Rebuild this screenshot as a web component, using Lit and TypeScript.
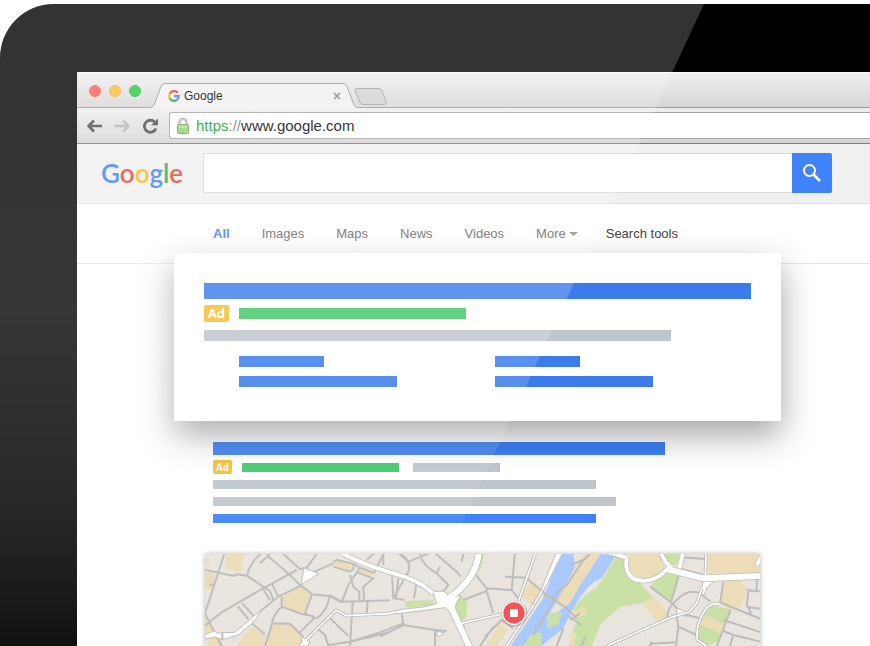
import { LitElement, html, svg, css } from "lit";
import { customElement, property } from "lit/decorators.js";

type Tone = "blue" | "green" | "grey";

/** A solid placeholder line standing in for result text. */
@customElement("text-bar")
class TextBar extends LitElement {
  @property({ reflect: true }) tone: Tone = "grey";
  @property({ type: Number }) span = 100;

  static styles = css`
    :host { display: block; flex: 1; }
    .bar { height: var(--bar-height, 11px); }
    .blue { background: var(--bar-blue, #3b7bec); }
    .green { background: #3fc766; }
    .grey { background: #bec6cc; }
  `;

  render() {
    return html`<div class="bar ${this.tone}" style="width:${this.span}px;max-width:100%"></div>`;
  }
}

@customElement("city-map")
class CityMap extends LitElement {
  static styles = css`
    :host { display: block; }
    svg { display: block; width: 100%; }
    .land { fill: #e9e5de; }
    .sand { fill: #ecdcb8; }
    .park { fill: #c9e1a7; }
    .water { fill: #a9c9ff; }
    .open { fill: #fff; stroke: #bdbdbd; stroke-width: 3; stroke-linejoin: round; }
    .street { fill: none; stroke: #bdbdbd; stroke-width: 6; stroke-linejoin: round; }
    .edge { fill: none; stroke: #b8b8b8; stroke-linejoin: round; }
    .road { fill: none; stroke: #fff; stroke-linejoin: round; }
    .e9 { stroke-width: 10; } .r9 { stroke-width: 5; }
    .e14 { stroke-width: 16; } .r14 { stroke-width: 12; }
    .e22 { stroke-width: 22; } .r22 { stroke-width: 18; }
  `;

  render() {
    const thin = [
      "M330 303L438 196L470 212L600 206",
      "M1250 303L1350 258L1440 218L1497 201L1520 175L1536 130",
      "M950 303L1025 190L1060 130",
      "M1550 303L1522 285Q1515 240 1545 195Q1560 172 1590 178",
      "M810 236L870 222L942 206",
      "M985 170L1038 20",
      "M1546 100L1548 20",
    ];
    const medium = [
      "M440 15Q500 52 600 82Q690 105 728 145",
      "M1310 40Q1300 105 1360 107Q1400 108 1432 72",
      "M1250 20L1310 38",
      "M1412 20Q1420 50 1446 68",
      "M1468 70L1480 20",
      "M1700 60L1720 25",
    ];
    const wide = [
      "M866 20Q862 100 776 160L790 200L840 310",
      "M1430 72L1540 100L1710 93",
    ];
    return html`<svg viewBox="45 27 1665 279" role="img" aria-label="City map">
      ${svg`
      <rect class="land" x="45" y="27" width="1668" height="279"/>
      <path class="sand" d="M45 38L60 42L58 62L45 66ZM45 80L75 84L70 135L45 130ZM110 27L165 27L160 40L150 50L160 60L150 82L105 68ZM45 210L70 252L45 270ZM50 275L75 268L92 306L60 306ZM275 158L333 120L365 150L342 206L312 198L282 182ZM185 246L222 268L225 306L135 306ZM245 236L300 238L340 280L340 306L228 306ZM430 48L480 52L486 70L470 77L432 66ZM512 64L550 80L542 98L505 84Z"/>
      <path class="sand" d="M1020 110L1056 138L1025 180L992 152ZM930 235L952 258L920 306L885 306ZM1150 70L1180 27L1238 27L1190 100L1140 205L1090 165ZM1318 27L1412 27L1424 70Q1395 108 1355 100Q1318 90 1314 50ZM1555 27L1713 27L1713 82L1555 92Z"/>
      <path class="water" d="M1110 27L1150 27L1155 65L1105 160L1020 306L960 306L1060 160Z"/>
      <path class="water" d="M1232 27L1276 34L1235 100Q1195 110 1150 190L1120 250L1050 306L1000 306L1060 230L1140 175L1165 130Z"/>
      <path class="park" d="M1278 35L1310 48Q1320 100 1362 105L1352 117L1390 158L1355 175L1290 185L1230 240L1205 303L1135 306L1160 220L1150 190Q1190 140 1220 130Z"/>
      <path class="park" d="M1430 75L1468 85L1444 168L1378 125L1405 100Q1420 90 1430 75ZM1424 27L1468 27Q1470 62 1446 62Q1428 55 1424 27ZM870 27L884 27L870 75L858 92ZM75 170M644 168L730 166L728 180L646 188ZM800 160L816 152L832 170L830 215L810 235Q782 190 800 160ZM1015 280Q1030 255 1055 265L1055 306L995 306ZM1078 205L1115 200L1105 240L1070 250ZM1565 180L1625 194L1582 290L1545 306L1525 280Q1520 230 1565 180Z"/>
      <path class="sand" d="M1145 205L1178 183L1188 190L1185 210L1160 218ZM1355 175L1392 158L1425 190L1430 232L1398 228L1380 200ZM1548 210L1605 240L1595 266L1530 240ZM1605 110L1650 106L1672 130L1655 180L1625 194L1590 175ZM1140 265L1160 265L1150 306L1140 306Z"/>
      <path class="street" d="M105 20L45 205M45 74L130 93L140 88L170 92L240 138L250 165M45 242L95 202L150 170L220 130L320 75M58 120L72 118M172 90Q180 50 220 20M210 55L240 27M230 30L300 90L332 122M280 27L330 72L350 68L380 27M215 125L240 165M245 115L265 155L333 122L355 88L430 55M143 184L175 222M157 175L190 212M265 155L215 195M185 235L225 268M275 155L275 185L335 207L372 214M275 185Q248 210 245 240L225 303M245 235L300 236L340 275M45 205L75 265L95 303M365 150L345 205L374 218L330 262M333 122L367 148L418 153L455 172L475 120L510 68M418 153Q415 195 378 222M430 50L440 45L485 55Q500 72 478 80L430 65M488 55L510 68L552 84L580 27M500 82L550 100L520 125L522 168M480 90L490 125L508 140L508 165M418 150L455 170L600 166M488 172L480 303M420 220L475 272M533 170L530 208M385 253L405 270L415 300L480 290L600 262M530 45L550 27"/>
      <path class="street" d="M580 27L580 60M630 27Q665 45 655 80L610 160M620 20L655 50L730 20M606 95L610 160L645 165M625 100L618 160M680 110L672 160M690 27Q695 60 740 85L775 120L755 145M730 20L800 80L812 95M740 85L750 65M820 27L815 50M858 90L890 130L890 138L820 165M890 130L965 135L985 160M975 20L965 135M945 95L1010 98M890 138L910 205M635 205L640 240L570 275M640 240L735 255L770 258M480 290L570 262L640 235M735 255L735 303M820 240L835 303M885 275L935 225L970 250M870 303L910 245M1010 100L1070 150L1130 190L1160 220M1090 150L1130 120L1180 45L1200 27M1095 160L1030 270M1060 150L1100 160M1140 60L1180 45M1140 225L1170 205M1100 303L1120 250M1175 303L1185 275M1130 210L1175 240M1380 125L1440 170L1490 215M1440 215L1432 220Q1430 190 1460 165Q1495 130 1530 145L1562 170M1468 85L1444 168M1475 37L1548 42M1472 72L1540 90M1490 210L1530 220M1590 175L1600 110M1590 172L1713 222M1622 195L1580 303M1600 225L1713 262M1460 215L1465 245L1520 270M1465 245L1458 303M1380 296L1460 292M1380 303L1385 290M1600 258L1630 270L1620 303M1630 270L1713 290M1675 185L1685 215M1670 185L1713 192M1670 135L1713 140M1670 185L1675 138M1700 95L1700 140"/>
      <path class="open" d="M342 68L387 86L333 120ZM45 268L72 258L82 264L134 262L195 210L216 194L190 232L145 270L97 284L75 276L45 282ZM738 260L764 262L745 277ZM1458 188L1495 203L1462 212ZM1540 100L1580 102L1550 130L1542 150L1532 148Z"/>
      ${thin.map((d) => svg`<path class="edge e9" d=${d}/>`)}
      ${medium.map((d) => svg`<path class="edge e14" d=${d}/>`)}
      ${wide.map((d) => svg`<path class="edge e22" d=${d}/>`)}
      <path class="open" d="M590 202L650 191L700 186L740 176L728 140L762 138L780 158L812 150L785 206L765 188L650 203L590 209Z"/>
      <path class="open" d="M1100 20L1120 20L1062 135L1055 130ZM335 275L360 292L350 306L335 300Z"/>
      ${thin.map((d) => svg`<path class="road r9" d=${d}/>`)}
      ${medium.map((d) => svg`<path class="road r14" d=${d}/>`)}
      ${wide.map((d) => svg`<path class="road r22" d=${d}/>`)}
      <path d="M97 262L97 286" class="street"/>
      <circle cx="973" cy="206" r="39" fill="#000" opacity=".18"/>
      <circle cx="972" cy="204" r="36" fill="#fff"/>
      <circle cx="972" cy="204" r="32" fill="#f65357"/>
      <rect x="960" y="192" width="24" height="24" fill="#fff"/>`}
    </svg>`;
  }
}

@customElement("app-root")
class AppRoot extends LitElement {
  static styles = css`
    :host {
      display: block;
      background: #fff;
      font-family: "Liberation Sans", Arial, sans-serif;
    }
    * { box-sizing: border-box; }
    button { border: 0; padding: 0; background: none; font: inherit; color: inherit; display: block; }
    svg { display: block; }
    .page { height: 100vh; overflow: hidden; padding-top: 4px; }
    .device {
      position: relative;
      min-height: 100%;
      padding: 68px 0 0 77px;
      border-radius: 54px 0 0 0;
      overflow: hidden;
      background: linear-gradient(#000 0, #020202 20%, #080808 50%, #151515 70%, #161616 84%, #111 100%);
    }
    .glare {
      position: absolute;
      inset: 0;
      pointer-events: none;
      z-index: 3;
      background: linear-gradient(rgba(255,255,255,.2) 0, rgba(255,255,255,.19) 48%, rgba(255,255,255,.1) 70%, rgba(255,255,255,0) 100%);
      clip-path: polygon(0 0, 704px 0, 405px 642px, 0 642px);
    }
    .screen { background: #fff; min-height: 574px; }

    .tabstrip {
      display: flex;
      align-items: flex-end;
      height: 36px;
      padding-left: 12px;
      background: linear-gradient(#efefef, #d6d6d6);
      box-shadow: inset 0 -1px #9a9a9a, inset 0 1px #f8f8f8;
    }
    .lights { display: flex; gap: 8px; padding-bottom: 11px; }
    .light { width: 12px; height: 12px; border-radius: 50%; }
    .close { background: #ff5f56; border: 1px solid #ec6259; }
    .min { background: #ffbd2e; border: 1px solid #e5ae3f; }
    .max { background: #2ac940; border: 1px solid #2eb543; }
    .tab {
      position: relative;
      display: flex;
      align-items: center;
      width: 208px;
      height: 25px;
      margin-left: 9px;
      padding: 0 17px 0 18px;
      gap: 4px;
      font-size: 12px;
      color: #000;
    }
    .tab-shape { position: absolute; inset: 0; }
    .tab-icon, .tab-title, .tab-close { position: relative; }
    .tab-title { flex: 1; }
    .new-tab { margin: 0 0 3px -4px; }

    .toolbar {
      display: flex;
      align-items: center;
      height: 36px;
      padding-left: 9px;
      background: linear-gradient(#eeeeee, #d4d4d4);
      border-bottom: 1px solid #7c7c7c;
    }
    .nav-icons { display: flex; gap: 10px; }
    .address {
      flex: 1;
      display: flex;
      align-items: center;
      gap: 7px;
      height: 27px;
      margin-left: 9px;
      padding-left: 7px;
      border: 1px solid #a6a6a6;
      border-right: 0;
      border-radius: 3px 0 0 3px;
      background: #fff;
      font-size: 15px;
      color: #000;
    }
    .secure { color: #0a9d1b; }
    .slashes { color: #777; }

    .search {
      display: flex;
      align-items: center;
      height: 60px;
      padding: 0 38px 2px 24px;
      background: #f0f0f0;
      border-bottom: 1px solid #e2e2e2;
    }
    .logo {
      width: 102px;
      font: 600 26px/32px Lato, sans-serif;
      text-decoration: none;
    }
    .lb { color: #3f82f5; } .lr { color: #ea4335; } .ly { color: #fbbc05; } .lg { color: #34a853; }
    .query {
      flex: 1;
      min-width: 0;
      height: 40px;
      border: 1px solid #d9d9d9;
      border-right: 0;
      padding: 0 12px;
      font: 16px "Liberation Sans", Arial, sans-serif;
      background: #fff;
    }
    .go {
      display: grid;
      place-items: center;
      width: 40px;
      height: 40px;
      border-radius: 0 2px 2px 0;
      background: #4083f9;
    }

    .filters {
      display: flex;
      gap: 28px;
      height: 60px;
      padding-left: 136px;
      border-bottom: 1px solid #e6e6e6;
      font-size: 13px;
      line-height: 59px;
      white-space: nowrap;
    }
    .kinds { display: flex; gap: 32px; }
    .filters a, .filters button { color: #666; text-decoration: none; }
    .filters .active { color: #3b7ff5; font-weight: 700; }
    .more { display: flex; align-items: center; gap: 3px; }
    .filters .tools { color: #444; }

    .card {
      position: relative;
      z-index: 2;
      margin: -11px 89px 0 97px;
      padding: 30px 30px 34px;
      background: #fff;
      box-shadow: 0 14px 32px rgba(0,0,0,.36);
    }
    .line { display: flex; align-items: center; }
    .badge {
      border-radius: 2px;
      background: #f6bd2d;
      color: #fff;
      font-family: "Open Sans", sans-serif;
      font-weight: 700;
      text-align: center;
    }
    .card .title { --bar-height: 16px; }
    .card .line { gap: 10px; margin: 6px 0 8px; }
    .card .badge { width: 25px; height: 17px; font-size: 13px; line-height: 17px; }
    .links {
      display: grid;
      grid-template-columns: 1fr 1fr;
      row-gap: 9px;
      margin-top: 15px;
      padding-left: 35px;
    }

    .result {
      --bar-height: 9px;
      --bar-blue: #3f82f9;
      display: grid;
      margin: 21px 105px 0 136px;
    }
    .result .title { --bar-height: 13px; --bar-blue: #3d80f6; }
    .result .line { gap: 10px; margin: 5px 0 6px; }
    .result .badge { width: 19px; height: 14px; font-size: 10px; line-height: 14px; }
    .result .site { flex: none; width: 161px; }
    .rows { display: grid; gap: 8px; }
    .map {
      margin: 31px 110px 0 128px;
      box-shadow: 0 0 5px rgba(0,0,0,.3);
    }
  `;

  private cardLinks = [85, 85, 158, 158];
  private resultRows: { tone: Tone; span: number }[] = [
    { tone: "grey", span: 383 },
    { tone: "grey", span: 403 },
    { tone: "blue", span: 383 },
  ];

  private tabStrip() {
    return html`<div class="tabstrip">
      <div class="lights">
        <button class="light close" aria-label="Close window"></button>
        <button class="light min" aria-label="Minimise"></button>
        <button class="light max" aria-label="Zoom"></button>
      </div>
      <div class="tab">
        <svg class="tab-shape" width="208" height="25" viewBox="0 0 208 25">
          <path d="M0 25L0 24.5Q3 24.5 4 22L11 4Q12.500 1 15 1L193 1Q196 1 197 4L204 22Q205 24.500 208 24.500L208 25Z" fill="#f0f0f0"/>
          <path d="M0 24.5Q3 24.500 4 22L11 3.500Q12.500 .5 15 .5L193 .5Q196 .5 197 3.500L204 22Q205 24.500 208 24.500" fill="none" stroke="#999"/>
        </svg>
        <svg class="tab-icon" width="12" height="12" viewBox="0 0 24 24" fill="none" stroke-width="4.800">
          <path d="M19.500 5.500A9.600 9.600 0 0 0 3.600 7.500" stroke="#ea4335"/>
          <path d="M3.600 7.500A9.600 9.600 0 0 0 3.600 16.500" stroke="#fbbc05"/>
          <path d="M3.600 16.500A9.600 9.600 0 0 0 18.300 19.500" stroke="#34a853"/>
          <path d="M18.300 19.500Q21.500 16.500 21.500 12.200L12 12.200" stroke="#4285f4"/>
        </svg>
        <span class="tab-title">Google</span>
        <button class="tab-close" aria-label="Close tab">
          <svg width="8" height="8" viewBox="0 0 8 8" stroke="#808080" stroke-width="1.500"><path d="M1 1L7 7M7 1L1 7"/></svg>
        </button>
      </div>
      <button class="new-tab" aria-label="New tab">
        <svg width="33" height="17" viewBox="0 0 33 17"><path d="M3 .5L25 .5Q27 .5 28 2.500L32 13.500Q33 16.500 30 16.500L9 16.500Q7 16.500 6 14.500L1 3Q.5 .5 3 .5Z" fill="#d2d2d2" stroke="#a2a2a2"/></svg>
      </button>
    </div>`;
  }

  private toolbar() {
    return html`<div class="toolbar">
      <div class="nav-icons">
        <button aria-label="Back">
          <svg width="18" height="16" viewBox="0 0 18 16" fill="none" stroke="#4c4c4c" stroke-width="2.600" stroke-linejoin="round"><path d="M8 2.500L2.500 8L8 13.500M2.500 8L16 8"/></svg>
        </button>
        <button aria-label="Forward">
          <svg width="18" height="16" viewBox="0 0 18 16" fill="none" stroke="#b4b4b4" stroke-width="2.400" stroke-linejoin="round"><path d="M9 2.500L14.500 8L9 13.500M0 8L14.500 8"/></svg>
        </button>
        <button aria-label="Reload">
          <svg width="18" height="16" viewBox="0 0 18 16"><path d="M12.700 4A6 6 0 1 0 14 10.500" fill="none" stroke="#4c4c4c" stroke-width="2.800"/><path d="M16 .5L16 7.200L9 7.200Z" fill="#4c4c4c"/></svg>
        </button>
      </div>
      <div class="address" role="textbox" aria-label="Address">
        <svg width="12" height="16" viewBox="0 0 12 16">
          <path d="M2.500 8L2.500 4.500Q2.500 1 6 1Q9.500 1 9.500 4.500L9.500 8" fill="none" stroke="#888" stroke-width="2"/>
          <path d="M2.500 8L2.500 4.500Q2.500 1 6 1Q9.500 1 9.500 4.500L9.500 8" fill="none" stroke="#e4e4e4" stroke-width=".8"/>
          <rect x=".5" y="6.500" width="11" height="9" rx="1" fill="#8fd36c" stroke="#6aa04c"/>
          <path d="M1.500 8L10.500 8M1.500 9.500L10.500 9.500" stroke="#b4e698"/>
        </svg>
        <span><span class="secure">https</span><span class="slashes">://</span>www.google.com</span>
      </div>
    </div>`;
  }

  render() {
    return html`<div class="page"><div class="device">
      <div class="screen">
        ${this.tabStrip()}
        ${this.toolbar()}
        <form class="search">
          <a class="logo" href="#" aria-label="Google"><span class="lb">G</span><span class="lr">o</span><span class="ly">o</span><span class="lb">g</span><span class="lg">l</span><span class="lr">e</span></a>
          <input class="query" type="text" aria-label="Search" />
          <button class="go" type="button" aria-label="Search">
            <svg width="20" height="20" viewBox="0 0 20 20" fill="none" stroke="#fff"><circle cx="7.500" cy="7.500" r="5.500" stroke-width="2"/><path d="M11.500 11.500L18 18" stroke-width="2.600"/></svg>
          </button>
        </form>
        <nav class="filters">
          <div class="kinds">
            <a class="active" href="#">All</a>
            <a href="#">Images</a>
            <a href="#">Maps</a>
            <a href="#">News</a>
            <a href="#">Videos</a>
            <button class="more">More
              <svg width="9" height="4" viewBox="0 0 9 4"><path d="M0 0L9 0L4.500 4Z" fill="#8c8c8c"/></svg>
            </button>
          </div>
          <button class="tools">Search tools</button>
        </nav>
        <section class="card">
          <text-bar class="title" tone="blue" .span=${547}></text-bar>
          <div class="line"><span class="badge">Ad</span><text-bar tone="green" .span=${227}></text-bar></div>
          <text-bar tone="grey" .span=${467}></text-bar>
          <div class="links">${this.cardLinks.map((w) => html`<text-bar tone="blue" .span=${w}></text-bar>`)}</div>
        </section>
        <section class="result">
          <text-bar class="title" tone="blue" .span=${452}></text-bar>
          <div class="line">
            <span class="badge">Ad</span>
            <text-bar class="site" tone="green" .span=${157}></text-bar>
            <text-bar tone="grey" .span=${87}></text-bar>
          </div>
          <div class="rows">${this.resultRows.map((r) => html`<text-bar .tone=${r.tone} .span=${r.span}></text-bar>`)}</div>
        </section>
        <city-map class="map"></city-map>
      </div>
      <div class="glare"></div>
    </div></div>`;
  }
}
